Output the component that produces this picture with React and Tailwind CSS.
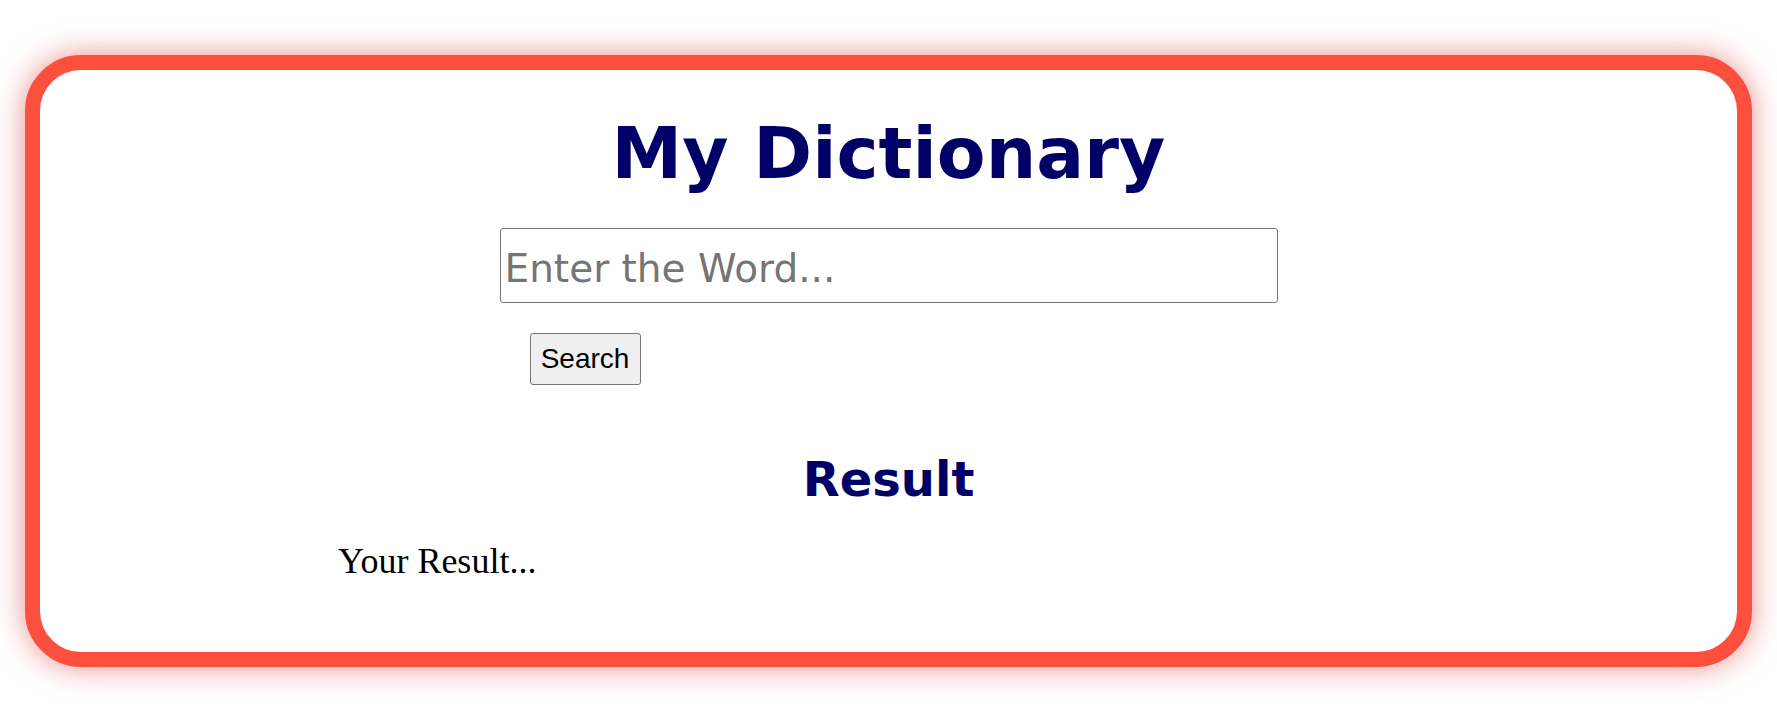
import React, { useState } from "react";

function App() {
    const [word, setWord] = useState("")

    return (
        <div className="w-[1777px] h-[713px] bg-white pt-[55px] px-[25px]">
            <div className="h-[612px] rounded-[56px] border-[15px] border-[#fd4f3d] bg-white shadow-[0_0_30px_rgba(215,50,50,0.55)] flex flex-col">
                <h1 className="mt-[42px] text-center text-[71px] leading-[84px] font-bold text-[#000066] font-['DejaVu_Sans',Verdana,sans-serif]">My Dictionary</h1>

                <div className="mt-[32px] flex flex-col items-center">
                    <input
                        type="text"
                        placeholder="Enter the Word..."
                        value={word}
                        onChange={(e) => setWord(e.target.value)}
                        className="w-[778px] h-[75px] border border-[#767676] rounded-[3px] px-[4px] pt-[6px] text-[39px] text-black placeholder:text-[#757575] font-['DejaVu_Sans',Verdana,sans-serif] outline-none"
                    />
                    <div className="w-[778px] mt-[30px]">
                        <button className="ml-[30px] w-[111px] h-[52px] bg-[#efefef] border border-[#767676] rounded-[3px] text-[28px] text-black font-['Liberation_Sans',Arial,sans-serif]">Search</button>
                    </div>
                </div>

                <h2 className="mt-[66px] text-center text-[48px] leading-[56px] font-bold text-[#000066] font-['DejaVu_Sans',Verdana,sans-serif]">Result</h2>
                <p className="mt-[34px] pl-[298px] text-[36px] leading-[40px] text-black font-['Liberation_Serif','Times_New_Roman',serif]">Your Result...</p>
            </div>
        </div>
    );
}

export default App;
